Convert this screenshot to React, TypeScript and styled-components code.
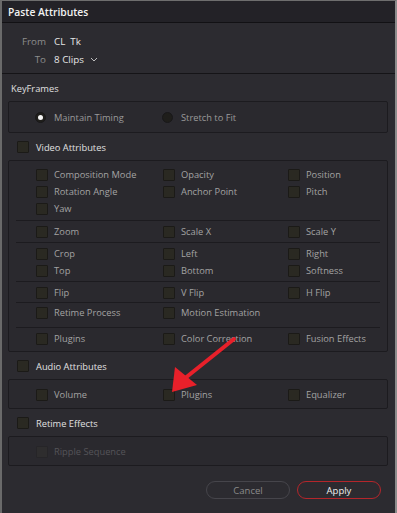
import React from "react";
import styled, { createGlobalStyle, css } from "styled-components";

const GlobalStyle = createGlobalStyle`
  html, body {
    margin: 0;
    padding: 0;
    background: #2c2b30;
  }
  * {
    box-sizing: border-box;
  }
`;

const Window = styled.div`
  position: relative;
  width: 397px;
  height: 513px;
  background: #2c2b30;
  border-top: 1px solid #6e6e6e;
  border-left: 2px solid #6a6a6a;
  border-right: 2px solid #8c8c8c;
  font-family: "Open Sans", "Noto Sans", sans-serif;
  font-size: 9.3px;
  color: #a3a3a3;
  overflow: hidden;
`;

const TitleBar = styled.div`
  height: 22px;
  display: flex;
  align-items: center;
  padding-left: 6px;
  background: #232227;
  border-bottom: 1px solid #121114;
  color: #f2f2f2;
  font-size: 10.3px;
  font-weight: 600;
`;

const Info = styled.div`
  display: grid;
  grid-template-columns: 44px auto;
  grid-auto-rows: 18px;
  column-gap: 8px;
  align-items: center;
  padding: 9px 0 5px;
  border-bottom: 1px solid #151417;
  font-size: 9.8px;
`;

const InfoLabel = styled.span`
  text-align: right;
  color: #8d8d8d;
`;

const InfoValue = styled.span`
  display: flex;
  align-items: center;
  gap: 6px;
  color: #e6e6e6;
`;

const SectionLabel = styled.div`
  height: 16px;
  margin-top: 6px;
  padding-left: 9px;
  display: flex;
  align-items: center;
  color: #e0e0e0;
`;

const SectionHeader = styled.div`
  height: 16px;
  margin-top: 6px;
  padding-left: 15px;
  display: flex;
  align-items: center;
  gap: 7px;
  color: #e0e0e0;
`;

const Box = styled.div`
  margin: 5px 7px 0 6px;
  border: 1px solid #1c1b1f;
  border-radius: 2px;
  background: #2a292e;
`;

const RadioRow = styled.div`
  height: 30px;
  display: flex;
  align-items: center;
  padding-left: 26px;
`;

const RadioOption = styled.label`
  width: 127px;
  display: flex;
  align-items: center;
  gap: 8px;
  color: #9a9a9a;
`;

const Radio = styled.span<{ $on?: boolean }>`
  width: 11px;
  height: 11px;
  border-radius: 50%;
  background: #1f1e1b;
  border: 1px solid #19181a;
  display: flex;
  align-items: center;
  justify-content: center;

  &::after {
    content: "";
    width: 5px;
    height: 5px;
    border-radius: 50%;
    background: ${({ $on }) => ($on ? "#f5f5f5" : "transparent")};
  }
`;

const Check = styled.span<{ $disabled?: boolean }>`
  width: 12px;
  height: 12px;
  flex: none;
  border-radius: 1px;
  background: #2a2922;
  border: 1px solid #1b1a17;
  ${({ $disabled }) =>
    $disabled &&
    css`
      background: #2e2d2e;
      border-color: #262528;
    `}
`;

const Group = styled.div<{ $pad: string }>`
  display: grid;
  grid-template-columns: 127px 125px 1fr;
  grid-auto-rows: 17px;
  padding: ${({ $pad }) => $pad};
  padding-left: 20px;
  margin: 0 7px;

  & + & {
    border-top: 1px solid #1c1b1f;
  }
`;

const Item = styled.div<{ $disabled?: boolean }>`
  display: flex;
  align-items: center;
  gap: 6px;
  color: ${({ $disabled }) => ($disabled ? "#555459" : "#a3a3a3")};
  white-space: nowrap;
`;

const Footer = styled.div`
  display: flex;
  justify-content: flex-end;
  gap: 7px;
  margin-top: 15px;
  padding-right: 14px;
`;

const Button = styled.button<{ $primary?: boolean }>`
  width: 84px;
  height: 18px;
  border-radius: 9px;
  background: transparent;
  font-family: inherit;
  font-size: 9.5px;
  padding: 0;
  border: 1px solid ${({ $primary }) => ($primary ? "#b4262b" : "#46454b")};
  color: ${({ $primary }) => ($primary ? "#efefef" : "#8a8a8a")};
`;

const Arrow = styled.svg`
  position: absolute;
  left: 0;
  top: 0;
  pointer-events: none;
`;

type Cell = { label: string; disabled?: boolean } | null;

const videoGroups: { pad: string; cells: Cell[] }[] = [
  {
    pad: "5px 0 3px",
    cells: [
      { label: "Composition Mode" },
      { label: "Opacity" },
      { label: "Position" },
      { label: "Rotation Angle" },
      { label: "Anchor Point" },
      { label: "Pitch" },
      { label: "Yaw" },
    ],
  },
  {
    pad: "2px 0 2px",
    cells: [{ label: "Zoom" }, { label: "Scale X" }, { label: "Scale Y" }],
  },
  {
    pad: "2px 0 2px",
    cells: [
      { label: "Crop" },
      { label: "Left" },
      { label: "Right" },
      { label: "Top" },
      { label: "Bottom" },
      { label: "Softness" },
    ],
  },
  {
    pad: "2px 0 1px",
    cells: [{ label: "Flip" }, { label: "V Flip" }, { label: "H Flip" }],
  },
  {
    pad: "1px 0 6px",
    cells: [{ label: "Retime Process" }, { label: "Motion Estimation" }, null],
  },
  {
    pad: "2px 0 4px",
    cells: [
      { label: "Plugins" },
      { label: "Color Correction" },
      { label: "Fusion Effects" },
    ],
  },
];

const renderCells = (cells: Cell[]) =>
  cells.map((c, i) =>
    c ? (
      <Item key={i} $disabled={c.disabled}>
        <Check $disabled={c.disabled} />
        {c.label}
      </Item>
    ) : (
      <span key={i} />
    )
  );

const App: React.FC = () => {
  return (
    <>
      <GlobalStyle />
      <Window>
        <TitleBar>Paste Attributes</TitleBar>
        <Info>
          <InfoLabel>From</InfoLabel>
          <InfoValue>CL&nbsp;&nbsp;Tk</InfoValue>
          <InfoLabel>To</InfoLabel>
          <InfoValue>
            8 Clips
            <svg width="8" height="5" viewBox="0 0 8 5">
              <path d="M1 1 L4 4 L7 1" stroke="#bdbdbd" strokeWidth="1" fill="none" />
            </svg>
          </InfoValue>
        </Info>

        <SectionLabel>KeyFrames</SectionLabel>
        <Box>
          <RadioRow>
            <RadioOption>
              <Radio $on />
              Maintain Timing
            </RadioOption>
            <RadioOption>
              <Radio />
              Stretch to Fit
            </RadioOption>
          </RadioRow>
        </Box>

        <SectionHeader>
          <Check />
          Video Attributes
        </SectionHeader>
        <Box>
          {videoGroups.map((g, i) => (
            <Group key={i} $pad={g.pad}>
              {renderCells(g.cells)}
            </Group>
          ))}
        </Box>

        <SectionHeader>
          <Check />
          Audio Attributes
        </SectionHeader>
        <Box>
          <Group $pad="6px 0 5px">
            {renderCells([
              { label: "Volume" },
              { label: "Plugins" },
              { label: "Equalizer" },
            ])}
          </Group>
        </Box>

        <SectionHeader>
          <Check />
          Retime Effects
        </SectionHeader>
        <Box>
          <Group $pad="6px 0 5px">
            {renderCells([{ label: "Ripple Sequence", disabled: true }])}
          </Group>
        </Box>

        <Footer>
          <Button>Cancel</Button>
          <Button $primary>Apply</Button>
        </Footer>

        <Arrow width="397" height="513" viewBox="0 0 397 513">
          <line x1="232" y1="338" x2="182" y2="378" stroke="#e8202a" strokeWidth="4" strokeLinecap="round" />
          <polygon points="170,391 173,366 195,384" fill="#e8202a" />
        </Arrow>
      </Window>
    </>
  );
};

export default App;
